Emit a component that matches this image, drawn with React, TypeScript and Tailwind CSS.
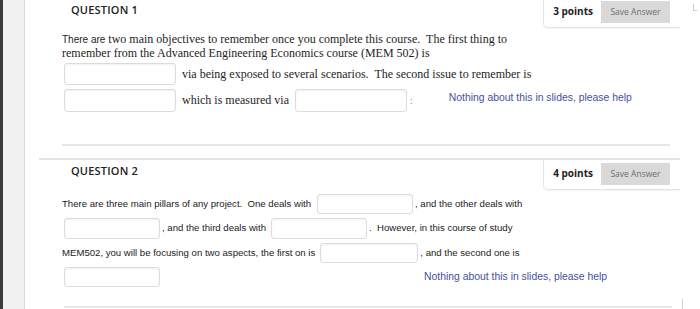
import React from "react";

const serif = { fontFamily: '"Liberation Serif", "Times New Roman", serif' };
const sans = { fontFamily: '"Liberation Sans", Arial, sans-serif' };
const open = { fontFamily: '"Open Sans", "Liberation Sans", sans-serif' };

const Blank = ({ w, h = 20 }: { w: number; h?: number }) => (
  <div
    className="shrink-0 rounded-[3px] border border-[#dcdcdc] bg-white shadow-[inset_0_1px_2px_rgba(0,0,0,0.06)]"
    style={{ width: w, height: h }}
  />
);

const PointsBox = ({ points }: { points: number }) => (
  <div
    className="flex h-[30px] items-start border-b border-l border-[#e3e3e3] rounded-bl-[5px] pl-[9px] pr-[10px] shadow-[0_1px_1px_rgba(0,0,0,0.05)]"
    style={open}
  >
    <span className="mt-[6px] text-[10px] font-bold text-[#222]">
      {points} points
    </span>
    <button className="ml-[8px] mt-[3px] h-[22px] w-[69px] bg-[#d9d9d9] text-[8.5px] text-[#6f6f6f]">
      Save Answer
    </button>
  </div>
);

const Help = () => (
  <span className="text-[10.4px] text-[#45509c]" style={sans}>
    Nothing about this in slides, please help
  </span>
);

const QuestionOne = () => (
  <div className="-mt-[2px] h-[160px]">
    <div className="flex items-start justify-between">
      <h2 className="mt-[4px] ml-[32px] text-[11px] font-semibold tracking-[0.2px] text-[#222]" style={open}>
        QUESTION 1
      </h2>
      <PointsBox points={3} />
    </div>
    <div className="ml-[23px] text-[12px] leading-[13px] text-[#1e1e1e]" style={serif}>
      <p className="mt-[5px]">
        <span className="text-[10px]" style={sans}>There are</span>
        {"  "}two main objectives to remember once you complete this course.&nbsp; The first thing to
      </p>
      <p className="mt-[1px]">remember from the Advanced Engineering Economics course (MEM 502) is</p>
      <div className="mt-[3px] flex items-center">
        <div className="ml-[2px]">
          <Blank w={112} h={22} />
        </div>
        <span className="ml-[6px]">via being exposed to several scenarios.&nbsp; The second issue to remember is</span>
      </div>
      <div className="mt-[4px] flex items-center">
        <div className="ml-[2px]">
          <Blank w={112} h={23} />
        </div>
        <span className="ml-[6px]">which is measured via</span>
        <div className="ml-[6px]">
          <Blank w={112} h={23} />
        </div>
        <span className="ml-[3px] text-[10px] leading-[10px] text-[#888]">:</span>
        <div className="ml-[36px] -mt-[6px]">
          <Help />
        </div>
      </div>
    </div>
    <div className="ml-[23px] mr-[10px] mt-[32px] border-t-2 border-[#e6e6e6]" />
  </div>
);

const QuestionTwo = () => (
  <div className="border-t-2 border-[#e3e3e3]">
    <div className="flex items-start justify-between">
      <h2 className="mt-[3px] ml-[32px] text-[11px] font-semibold tracking-[0.2px] text-[#222]" style={open}>
        QUESTION 2
      </h2>
      <PointsBox points={4} />
    </div>
    <div className="ml-[23px] mt-[4px] flex flex-col gap-[4px] text-[9.6px] text-[#222]" style={sans}>
      <div className="flex items-center">
        <span>There are three main pillars of any project.&nbsp; One deals with</span>
        <div className="ml-[6px]">
          <Blank w={96} />
        </div>
        <span className="ml-[2px]">, and the other deals with</span>
      </div>
      <div className="flex items-center">
        <div className="ml-[2px]">
          <Blank w={96} h={21} />
        </div>
        <span className="ml-[2px]">, and the third deals with</span>
        <div className="ml-[5px]">
          <Blank w={96} h={21} />
        </div>
        <span className="ml-[2px]">.&nbsp; However, in this course of study</span>
      </div>
      <div className="flex items-center">
        <span>MEM502, you will be focusing on two aspects, the first on is</span>
        <div className="ml-[5px]">
          <Blank w={98} />
        </div>
        <span className="ml-[2px]">, and the second one is</span>
      </div>
      <div className="flex items-center">
        <div className="ml-[2px]">
          <Blank w={96} />
        </div>
        <div className="ml-[264px]">
          <Help />
        </div>
      </div>
    </div>
    <div className="ml-[25px] mr-[8px] mt-[19px] border-t-2 border-[#e6e6e6]" />
  </div>
);

export default function App() {
  return (
    <div className="relative flex h-[309px] w-[700px] overflow-hidden bg-white">
      <div className="w-[3px] shrink-0 bg-[#3b3b3b]" />
      <div className="w-[22px] shrink-0 border-r border-[#dadada] bg-[#f1f1f1]" />
      <div className="ml-[14px] w-[641px] shrink-0">
        <QuestionOne />
        <QuestionTwo />
      </div>
      <div className="absolute right-[3px] top-[4px] h-[7px] w-[4px] border-b border-l border-[#cfcfcf]" />
      <div className="absolute right-[17px] top-[299px] h-[10px] w-px bg-[#d0d0d0]" />
    </div>
  );
}
